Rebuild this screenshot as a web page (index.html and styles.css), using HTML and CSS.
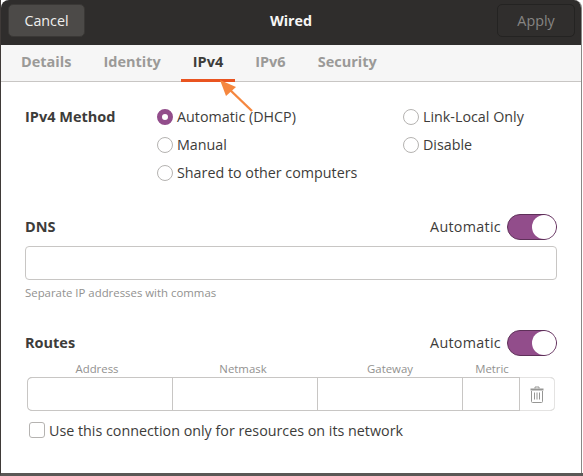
FILE: index.html
```html
<!DOCTYPE html>
<html lang="en">
<head>
    <meta charset="UTF-8">
    <title>Wired</title>
    <link rel="stylesheet" href="styles.css">
</head>
<body>
    <div class="window">
        <!-- Header bar -->
        <div class="headerbar">
            <button class="btn btn-cancel">Cancel</button>
            <div class="title">Wired</div>
            <button class="btn btn-apply">Apply</button>
        </div>

        <!-- Tabs -->
        <div class="tabs">
            <div class="tab">Details</div>
            <div class="tab">Identity</div>
            <div class="tab active">IPv4</div>
            <div class="tab">IPv6</div>
            <div class="tab">Security</div>
        </div>

        <!-- Arrow annotation -->
        <svg class="arrow" width="50" height="44" viewBox="0 0 50 44">
            <line x1="40" y1="36" x2="16" y2="13" stroke="#f5873f" stroke-width="2.4"/>
            <polygon points="8,5 24,12 14,21" fill="#f5873f"/>
        </svg>

        <div class="content">
            <!-- Method -->
            <div class="method">
                <div class="section-label">IPv4 Method</div>
                <div class="radio-col radio-col-main">
                    <div class="radio-row"><span class="radio checked"></span><span class="text">Automatic (DHCP)</span></div>
                    <div class="radio-row"><span class="radio"></span><span class="text">Manual</span></div>
                    <div class="radio-row"><span class="radio"></span><span class="text">Shared to other computers</span></div>
                </div>
                <div class="radio-col">
                    <div class="radio-row"><span class="radio"></span><span class="text">Link-Local Only</span></div>
                    <div class="radio-row"><span class="radio"></span><span class="text">Disable</span></div>
                </div>
            </div>

            <!-- DNS -->
            <div class="section-head dns-head">
                <div class="section-label">DNS</div>
                <div class="auto"><span class="text">Automatic</span> <span class="switch"><span class="knob"></span></span></div>
            </div>
            <div class="entry"></div>
            <div class="hint">Separate IP addresses with commas</div>

            <!-- Routes -->
            <div class="section-head routes-head">
                <div class="section-label">Routes</div>
                <div class="auto"><span class="text">Automatic</span> <span class="switch"><span class="knob"></span></span></div>
            </div>
            <div class="route-labels">
                <span>Address</span>
                <span>Netmask</span>
                <span>Gateway</span>
                <span>Metric</span>
            </div>
            <div class="route-row">
                <div class="cell"></div>
                <div class="cell"></div>
                <div class="cell"></div>
                <div class="cell"></div>
                <div class="trash">
                    <svg width="14" height="17" viewBox="0 0 14 17" fill="none" stroke="#969694" stroke-width="1">
                        <path d="M5 2.5V1h4v1.5"/>
                        <path d="M0.5 3.5h13" stroke-width="2"/>
                        <path d="M1.5 5v10.5a1 1 0 0 0 1 1h9a1 1 0 0 0 1-1V5"/>
                        <path d="M4.5 6.5v7M7 6.5v7M9.5 6.5v7"/>
                    </svg>
                </div>
            </div>
            <div class="check-row"><span class="checkbox"></span><span>Use this connection only for resources on its network</span></div>
        </div>
    </div>
</body>
</html>
```

FILE: styles.css
```css
html, body {
    margin: 0;
    padding: 0;
}

body {
    box-sizing: border-box;
    width: 583px;
    height: 476px;
    background-color: #fff;
    border-left: 1px solid #3f3a38;
    border-bottom: 3px solid #5a5856;
    font-family: "Open Sans", "Noto Sans", sans-serif;
    font-size: 14.3px;
    color: #3d3c3a;
    overflow: hidden;
}

.window {
    position: relative;
    box-sizing: border-box;
    width: 581px;
    height: 473px;
    background-color: #fff;
    border-right: 1px solid #8a8886;
    border-radius: 8px 8px 0 0;
    overflow: hidden;
}

/* Header bar */
.headerbar {
    display: flex;
    align-items: center;
    justify-content: space-between;
    box-sizing: border-box;
    height: 45px;
    padding: 0 6px 4px 7px;
    background-color: #2f2d2c;
    position: relative;
}

.btn {
    height: 33px;
    box-sizing: border-box;
    border-radius: 5px;
    font-family: inherit;
    font-size: 14.3px;
}

.btn-cancel {
    width: 77px;
    background-color: #4c4a48;
    border: 1px solid #3a3836;
    color: #f0efee;
}

.btn-apply {
    width: 78px;
    background-color: #302e2d;
    border: 1px solid #242322;
    color: #878583;
}

.title {
    position: absolute;
    left: 0;
    right: 0;
    top: 11px;
    text-align: center;
    font-weight: 700;
    color: #f6f5f4;
}

/* Tabs */
.tabs {
    display: flex;
    gap: 8px;
    box-sizing: border-box;
    height: 37px;
    padding-left: 8px;
    background-color: #f6f6f6;
    border-bottom: 1px solid #c8c6c4;
}

.tab {
    box-sizing: border-box;
    height: 37px;
    padding: 7px 12px 0;
    font-size: 14.5px;
    font-weight: 700;
    color: #9b9a98;
}

.tab.active {
    color: #3d3c3a;
    border-bottom: 3px solid #e95420;
}

.arrow {
    position: absolute;
    left: 211px;
    top: 75px;
}

/* Form */
.content {
    padding: 21px 24px 0;
}

.section-label {
    font-size: 14.5px;
    font-weight: 700;
    line-height: 20px;
}

.text {
    margin-bottom: 2px;
}

.method {
    display: flex;
}

.method .section-label {
    width: 132px;
    margin-top: 4px;
}

.radio-col-main {
    width: 246px;
}

.radio-row {
    display: flex;
    align-items: center;
    gap: 4px;
    height: 28px;
}

.radio {
    box-sizing: border-box;
    width: 16px;
    height: 16px;
    border: 1px solid #b5b3b1;
    border-radius: 50%;
    background-color: #fff;
}

.radio.checked {
    border: 5px solid #924d8b;
}

.section-head {
    display: flex;
    justify-content: space-between;
    align-items: center;
    height: 26px;
}

.dns-head {
    margin-top: 27px;
}

.routes-head {
    margin-top: 30px;
}

.auto {
    display: flex;
    align-items: center;
    gap: 6px;
    letter-spacing: 0.3px;
}

.switch {
    display: flex;
    justify-content: flex-end;
    box-sizing: border-box;
    width: 50px;
    height: 26px;
    background-color: #924d8b;
    border: 1px solid #5e3059;
    border-radius: 13px;
}

.knob {
    width: 24px;
    height: 24px;
    background-color: #fff;
    border-radius: 50%;
}

.entry {
    box-sizing: border-box;
    height: 34px;
    margin-top: 6px;
    background-color: #fff;
    border: 1px solid #c8c6c4;
    border-radius: 4px;
}

.hint {
    margin-top: 6px;
    font-size: 11.4px;
    line-height: 14px;
    color: #92918f;
}

.route-labels {
    display: grid;
    grid-template-columns: 144px 148px 146px 58px;
    margin-top: 5px;
    font-size: 11.4px;
    line-height: 15px;
    color: #92918f;
    text-align: center;
}

.route-row {
    display: grid;
    grid-template-columns: 146px 145px 145px 57px 1fr;
    box-sizing: border-box;
    width: 528px;
    height: 34px;
    margin: 1px 0 0 2px;
    border-top: 1px solid #c8c6c4;
    border-bottom: 1px solid #c8c6c4;
    border-radius: 5px;
}

.cell {
    box-sizing: border-box;
    border-right: 1px solid #c8c6c4;
}

.cell:first-child {
    margin: -1px 0;
    border: 1px solid #c8c6c4;
    border-radius: 5px 0 0 5px;
}

.trash {
    display: flex;
    align-items: center;
    justify-content: center;
    margin: -1px 0;
    border: 1px solid #e4e3e2;
    border-left: none;
    border-radius: 0 5px 5px 0;
}

.check-row {
    display: flex;
    align-items: center;
    gap: 4px;
    height: 20px;
    margin: 9px 0 0 4px;
}

.checkbox {
    box-sizing: border-box;
    width: 16px;
    height: 16px;
    border: 1px solid #b5b3b1;
    border-radius: 3px;
    background-color: #fff;
}
```
